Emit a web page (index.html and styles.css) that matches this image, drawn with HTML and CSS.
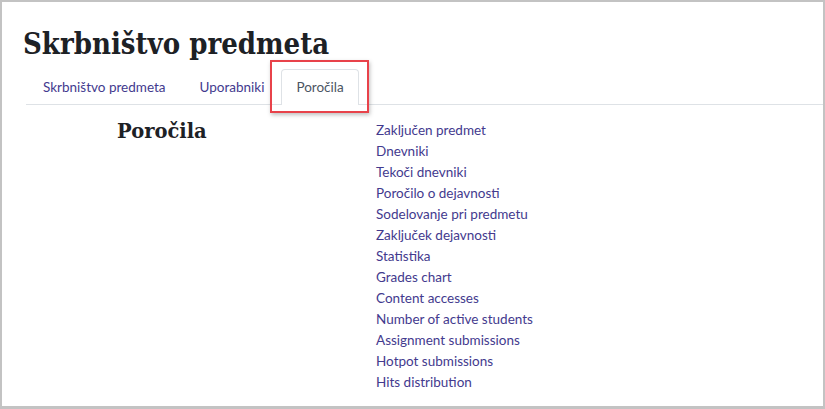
FILE: index.html
```html
<!DOCTYPE html>
<html lang="sl">
<head>
<meta charset="utf-8">
<title>Skrbništvo predmeta</title>
<link rel="stylesheet" href="styles.css">
</head>
<body>
<div class="frame">
  <h1 class="title">Skrbništvo predmeta</h1>
  <nav class="tabs">
    <a class="tab" href="#">Skrbništvo predmeta</a>
    <a class="tab" href="#">Uporabniki</a>
    <a class="tab active" href="#">Poročila</a>
  </nav>
  <div class="section">
    <h2 class="section-title">Poročila</h2>
    <ul class="links">
      <li><a href="#">Zaključen predmet</a></li>
      <li><a href="#">Dnevniki</a></li>
      <li><a href="#">Tekoči dnevniki</a></li>
      <li><a href="#">Poročilo o dejavnosti</a></li>
      <li><a href="#">Sodelovanje pri predmetu</a></li>
      <li><a href="#">Zaključek dejavnosti</a></li>
      <li><a href="#">Statistika</a></li>
      <li><a href="#">Grades chart</a></li>
      <li><a href="#">Content accesses</a></li>
      <li><a href="#">Number of active students</a></li>
      <li><a href="#">Assignment submissions</a></li>
      <li><a href="#">Hotpot submissions</a></li>
      <li><a href="#">Hits distribution</a></li>
    </ul>
  </div>
</div>
</body>
</html>
```

FILE: styles.css
```css
html, body {
  margin: 0;
  padding: 0;
  background: #ffffff;
}
.frame {
  box-sizing: border-box;
  width: 825px;
  height: 409px;
  border: 2px solid #c3c3c3;
  border-bottom-width: 3px;
  overflow: hidden;
  padding: 0 0 0 24px;
  font-family: Lato, "Liberation Sans", sans-serif;
}
.title {
  margin: 24px 0 0 -3px;
  font-family: "DejaVu Serif Condensed", "DejaVu Serif", serif;
  font-stretch: condensed;
  font-weight: bold;
  font-size: 29px;
  line-height: 36px;
  color: #1d2125;
}
.tabs {
  display: flex;
  margin-top: 7px;
  border-bottom: 1px solid #dee2e6;
  padding-left: 0;
  position: relative;
}
.tab {
  display: block;
  padding: 0 16px;
  height: 34px;
  line-height: 34px;
  font-size: 13.5px;
  color: #433a8e;
  text-decoration: none;
  border: 1px solid transparent;
  border-bottom: none;
  border-radius: 4px 4px 0 0;
  margin-bottom: -1px;
}
.tab.active {
  border-color: #dee2e6;
  background: #fff;
  color: #4b5563;
  height: 35px;
  padding: 0 14px;
  position: relative;
}
.tab.active::after {
  content: "";
  position: absolute;
  left: -12px;
  top: -10px;
  width: 95px;
  height: 49px;
  border: 2px solid #e8424a;
  box-shadow: 1px 2px 4px rgba(0,0,0,0.25);
}
.section {
  display: grid;
  grid-template-columns: 350px 1fr;
  padding-top: 10px;
}
.section-title {
  margin: 4px 0 0 91px;
  font-family: "DejaVu Serif", serif;
  font-weight: bold;
  font-size: 19.5px;
  line-height: 26px;
  color: #1d2125;
}
.links {
  list-style: none;
  margin: 0;
  padding: 5px 0 0 0;
}
.links li {
  height: 21px;
  line-height: 21px;
  font-size: 13.5px;
}
.links a {
  color: #433a8e;
  text-decoration: none;
}
```
